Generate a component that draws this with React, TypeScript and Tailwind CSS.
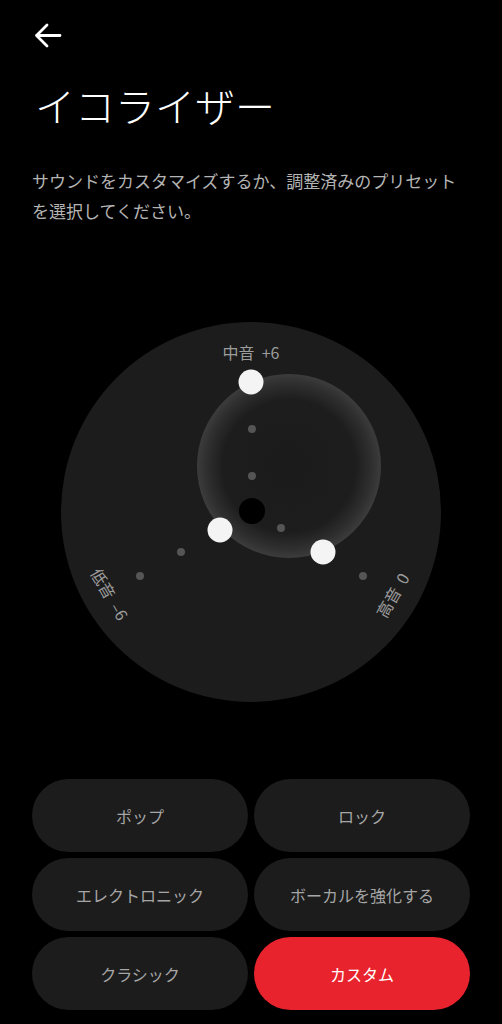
import React, { useState } from 'react';

const presets = ['ポップ', 'ロック', 'エレクトロニック', 'ボーカルを強化する', 'クラシック', 'カスタム'];

// dial drawing, coordinates relative to the 380x380 disc
const dots: [number, number][] = [
  [191, 107],
  [191, 154],
  [220, 206],
  [120, 230],
  [79, 254],
  [302, 254],
];

const knobs: [number, number][] = [
  [190, 60],
  [159, 208],
  [262, 230],
];

const Dial: React.FC = () => (
  <svg width="380" height="380" viewBox="0 0 380 380" className="block">
    <defs>
      <radialGradient id="glow" cx="50%" cy="50%" r="50%">
        <stop offset="0%" stopColor="#1b1b1b" />
        <stop offset="72%" stopColor="#1d1d1d" />
        <stop offset="90%" stopColor="#2f2f2f" />
        <stop offset="100%" stopColor="#3c3c3c" />
      </radialGradient>
    </defs>
    <circle cx="190" cy="190" r="190" fill="#1c1c1c" />
    <circle cx="228" cy="144" r="92" fill="url(#glow)" />
    {dots.map(([x, y], i) => (
      <circle key={i} cx={x} cy={y} r="4" fill="#555555" />
    ))}
    <circle cx="191" cy="189" r="13" fill="#000000" />
    {knobs.map(([x, y], i) => (
      <circle key={i} cx={x} cy={y} r="12.5" fill="#f4f4f4" />
    ))}
    <g fill="#9c9c9c" fontSize="16" fontFamily="'Noto Sans CJK JP', sans-serif" textAnchor="middle" dominantBaseline="central">
      <text x="190" y="30">{'中音\u00a0\u00a0+6'}</text>
      <text x="0" y="0" transform="translate(49 272) rotate(60)">{'低音\u00a0\u00a0–6'}</text>
      <text x="0" y="0" transform="translate(331 273) rotate(-60)">{'高音\u00a0\u00a00'}</text>
    </g>
  </svg>
);

export default function App() {
  const [active, setActive] = useState('カスタム');

  return (
    <div className="min-h-screen w-full bg-black px-8 pt-[23px] pb-4 text-white" style={{ fontFamily: "'Noto Sans CJK JP', 'Noto Sans', sans-serif" }}>
      {/* Back */}
      <button className="block pl-[2px]">
        <svg width="28" height="25" viewBox="0 0 28 25" fill="none" stroke="#ffffff" strokeWidth="2.8" strokeLinecap="round" strokeLinejoin="round">
          <path d="M26 12.5H2.5M13 2L2.5 12.5L13 23" />
        </svg>
      </button>

      <h1 className="mt-[33px] pl-[3px] text-[40px] leading-[48px] font-light text-white">イコライザー</h1>

      <p className="mt-[37px] text-[17px] leading-[30px] text-[#b4b4b4]">
        サウンドをカスタマイズするか、調整済みのプリセットを選択してください。
      </p>

      <div className="mt-[96px] flex justify-center">
        <Dial />
      </div>

      <div className="mt-[77px] grid grid-cols-2 gap-x-[6px] gap-y-[6px]">
        {presets.map((p) => (
          <button
            key={p}
            onClick={() => setActive(p)}
            className={
              active === p
                ? 'h-[73px] rounded-full bg-[#e8232d] text-base text-white'
                : 'h-[73px] rounded-full bg-[#1c1c1c] text-base text-[#a6a6a6]'
            }
          >
            {p}
          </button>
        ))}
      </div>
    </div>
  );
}
